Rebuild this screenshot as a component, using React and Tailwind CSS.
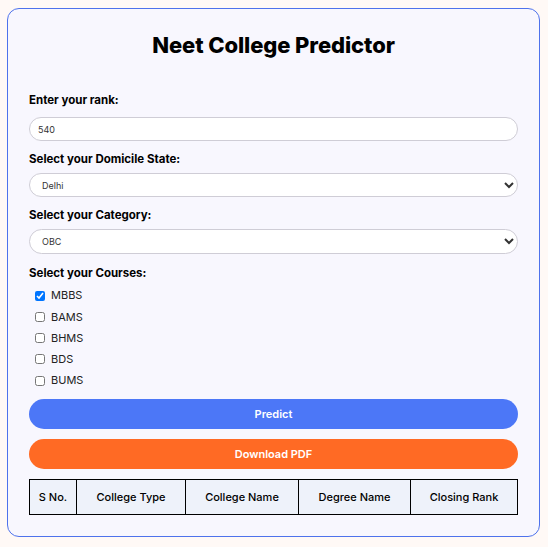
import React from 'react';

const courses = ['MBBS', 'BAMS', 'BHMS', 'BDS', 'BUMS'];
const columns = [
  { label: 'S No.', w: 'w-[47px]' },
  { label: 'College Type', w: 'w-[109px]' },
  { label: 'College Name', w: 'w-[113px]' },
  { label: 'Degree Name', w: 'w-[112px]' },
  { label: 'Closing Rank', w: '' },
];

export default function App() {
  return (
    <div className="min-h-[547px] bg-[#fff9f6] pt-[8px] pl-[7px] font-['Inter',sans-serif]">
      <div className="w-[533px] h-[529px] rounded-[12px] border border-[#4e72ec] bg-[#f8f7fe] px-[21px] pt-[22px]">
        <h1 className="text-center text-[22px] leading-[28px] font-extrabold tracking-[-0.1px] text-black">
          Neet College Predictor
        </h1>

        <div className="mt-[33px]">
          <label className="block text-[11.5px] leading-[16px] font-bold text-black">Enter your rank:</label>
          <input
            type="text"
            defaultValue="540"
            className="mt-[9px] block w-full h-[24px] rounded-full border border-[#cfcdd6] bg-white px-[8px] text-[9px] text-[#333] outline-none"
          />
        </div>

        <div className="mt-[10px]">
          <label className="block text-[11.5px] leading-[16px] font-bold text-black">Select your Domicile State:</label>
          <select
            defaultValue="Delhi"
            className="mt-[6px] block w-full h-[24px] rounded-full border border-[#cfcdd6] bg-white px-[8px] text-[9px] text-[#333] outline-none"
          >
            <option>Delhi</option>
          </select>
        </div>

        <div className="mt-[10px]">
          <label className="block text-[11.5px] leading-[16px] font-bold text-black">Select your Category:</label>
          <select
            defaultValue="OBC"
            className="mt-[6px] block w-full h-[25px] rounded-full border border-[#cfcdd6] bg-white px-[8px] text-[9px] text-[#333] outline-none"
          >
            <option>OBC</option>
          </select>
        </div>

        <div className="mt-[11px]">
          <label className="block text-[11.5px] leading-[16px] font-bold text-black">Select your Courses:</label>
          <div className="mt-[4px] pl-[6px] flex flex-col">
            {courses.map((c, i) => (
              <label key={c} className="flex items-center h-[21.25px] gap-[6px] text-[11px] text-[#222]">
                <input type="checkbox" defaultChecked={i === 0} className="w-[10px] h-[10px] m-0" />
                {c}
              </label>
            ))}
          </div>
        </div>

        <button className="mt-[8px] block w-full h-[30px] rounded-full bg-[#4c77f7] text-white text-[11px] font-semibold">
          Predict
        </button>
        <button className="mt-[10px] block w-full h-[30px] rounded-full bg-[#ff6a24] text-white text-[11px] font-semibold">
          Download PDF
        </button>

        <table className="mt-[10px] w-full border-collapse">
          <thead>
            <tr>
              {columns.map((col) => (
                <th
                  key={col.label}
                  className={`${col.w} h-[35px] border border-black bg-[#eef2fa] text-[11px] font-medium text-black`}
                >
                  {col.label}
                </th>
              ))}
            </tr>
          </thead>
        </table>
      </div>
    </div>
  );
}
